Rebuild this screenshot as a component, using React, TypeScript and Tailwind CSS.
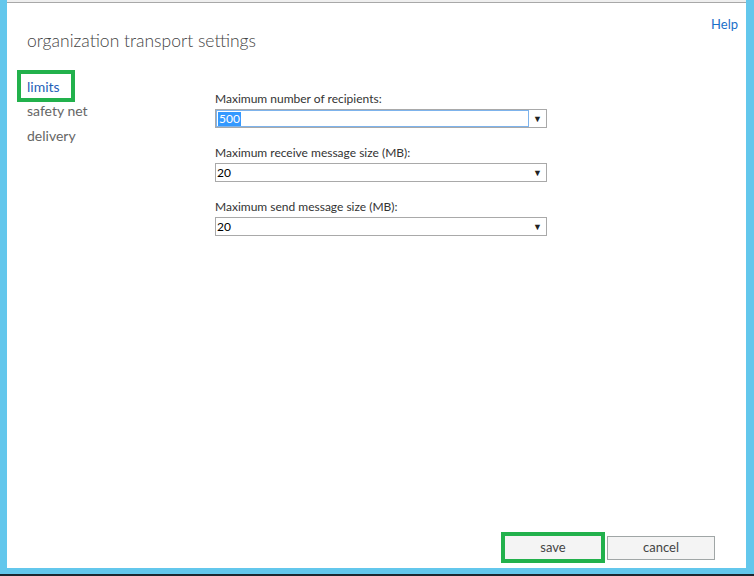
const font = "font-['Segoe_UI','Lato','Open_Sans',sans-serif]";

function Field({
  label,
  value,
  focused,
}: {
  label: string;
  value: string;
  focused?: boolean;
}) {
  return (
    <div className="flex flex-col">
      <label className="h-[16px] text-[12px] leading-[16px] text-[#333]">{label}</label>
      <div className="mt-[2px] flex h-[19px] w-[332px] border border-[#a9a9a9] bg-white">
        <div
          className={
            focused
              ? "flex flex-1 items-center border border-[#7db3ec] pl-[1px]"
              : "flex flex-1 items-center pl-[1px]"
          }
        >
          {focused ? (
            <span className="bg-[#3399ff] px-[1px] text-[12px] leading-[14px] text-white">{value}</span>
          ) : (
            <span className="text-[12px] leading-[14px] text-black">{value}</span>
          )}
        </div>
        <div className="flex w-[17px] items-center justify-center text-[9px] text-[#222]">▼</div>
      </div>
    </div>
  );
}

export default function App() {
  return (
    <div className={`flex h-[576px] w-[754px] flex-col ${font}`}>
      <div className="flex flex-1 bg-[#63c7ec] pb-[6px] pl-[7px] pr-[8px]">
        <div className="flex flex-1 flex-col bg-white">
          <div className="h-[3px] border-b border-[#a8a8a8] bg-[#efefef]" />
          <div className="flex justify-end pr-[8px] pt-[13px]">
            <a className="text-[13px] leading-[16px] text-[#1a6fc9]">Help</a>
          </div>
          <h1 className="mt-[-2px] pl-[20px] text-[17.5px] font-light leading-[22px] text-[#444]">
            organization transport settings
          </h1>
          <div className="mt-[18px] flex flex-1 pl-[20px]">
            <nav className="flex w-[188px] flex-col text-[14px]">
              <div className="-ml-[10px] flex h-[32px] w-[58px] items-center border-4 border-[#22b14c] pl-[6px] text-[#1f5fb8]">
                limits
              </div>
              <div className="mt-[-4px] leading-[25px] text-[#666]">safety net</div>
              <div className="leading-[25px] text-[#666]">delivery</div>
            </nav>
            <div className="flex flex-col gap-[17px] pt-[21px]">
              <Field label="Maximum number of recipients:" value="500" focused />
              <Field label="Maximum receive message size (MB):" value="20" />
              <Field label="Maximum send message size (MB):" value="20" />
            </div>
          </div>
          <div className="flex items-center justify-end gap-[2px] pb-[5px] pr-[31px]">
            <div className="border-4 border-[#22b14c]">
              <button className="block h-[23px] w-[96px] bg-[#f4f4f4] text-[13px] text-[#444]">save</button>
            </div>
            <button className="h-[24px] w-[108px] border border-[#a0a6a6] bg-[#f4f4f4] text-[13px] text-[#444]">
              cancel
            </button>
          </div>
        </div>
      </div>
      <div className="h-[2px] bg-[#1c2730]" />
    </div>
  );
}
